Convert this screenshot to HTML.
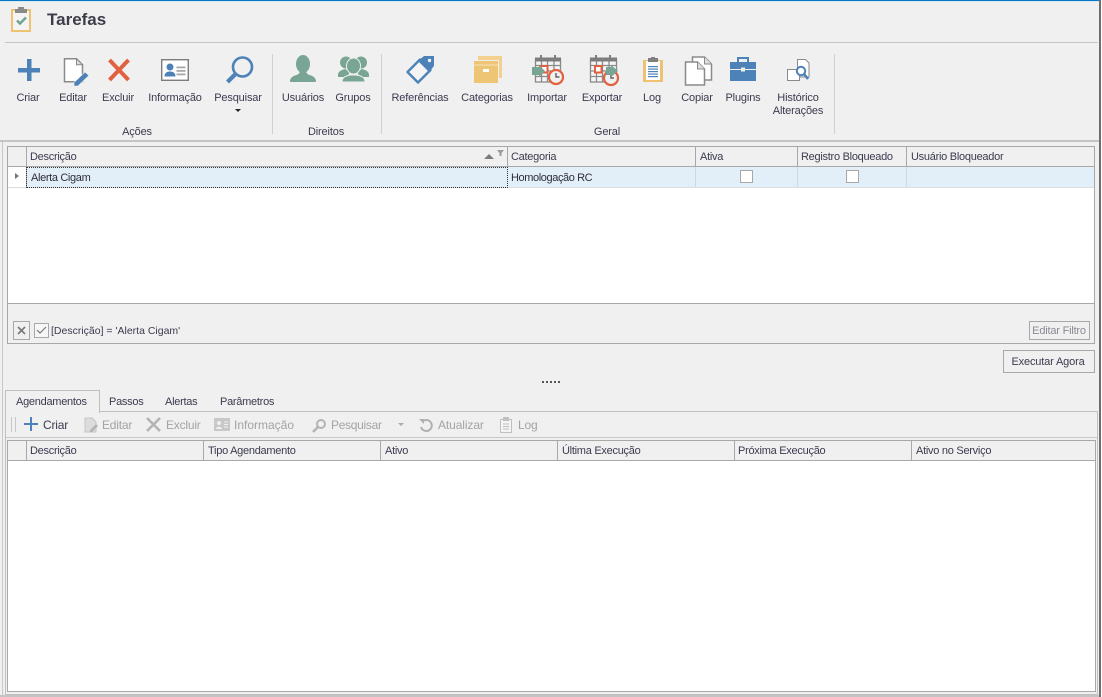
<!DOCTYPE html>
<html><head><meta charset="utf-8">
<style>
html,body{margin:0;padding:0}
body{width:1102px;height:697px;overflow:hidden;background:#f0f0f0;position:relative;font-family:"Liberation Sans",sans-serif;font-size:11px;color:#3b3b4f;letter-spacing:-.15px}
.a{position:absolute}
.t{position:absolute;white-space:nowrap;line-height:14px;height:14px;margin-top:1px}
.c{transform:translateX(-50%);text-align:center}
.b{font-size:12px;margin-top:0;letter-spacing:-.2px}
.h{letter-spacing:-.27px}
.g{color:#a3a3a3}
svg{position:absolute;overflow:visible}
</style></head><body>
<div class="a" style="left:0;top:0;width:1102px;height:1px;background:#0a78c8"></div>
<div class="a" style="left:0;top:1px;width:1102px;height:1px;background:#d8e6f0"></div>

<svg style="left:10px;top:6px" width="23" height="27" viewBox="0 0 23 27">
<rect x="2" y="4" width="18" height="21" fill="#f4f4f4" stroke="#efc272" stroke-width="2"/>
<rect x="1" y="24" width="20" height="2" fill="#efc272"/>
<rect x="5" y="3" width="12" height="4" fill="#8a8a8a"/><rect x="8" y="1" width="6" height="3" fill="#8a8a8a"/>
<path d="M7 14.500l3 3 6-6" fill="none" stroke="#6fa38e" stroke-width="2.4"/>
</svg>
<div class="t" style="left:47px;top:10px;font-size:17px;line-height:18px;height:18px;font-weight:bold;color:#3d3d4a;letter-spacing:0">Tarefas</div>
<div class="a" style="left:5px;top:42px;width:1093px;height:1px;background:#c4c4c4"></div>

<!-- ribbon separators -->
<div class="a" style="left:272px;top:54px;width:1px;height:80px;background:#d0d0d0"></div>
<div class="a" style="left:381px;top:54px;width:1px;height:80px;background:#d0d0d0"></div>
<div class="a" style="left:834px;top:54px;width:1px;height:80px;background:#d0d0d0"></div>

<!-- Criar -->
<svg style="left:18px;top:59px" width="22" height="22"><rect x="0" y="9" width="22" height="4.500" fill="#4d82b8"/><rect x="9" y="0" width="4.500" height="22" fill="#4d82b8"/></svg>
<!-- Editar -->
<svg style="left:63px;top:58px" width="27" height="28">
<path d="M1.500 .8h12l6 6v17H1.500z" fill="#fff" stroke="#8a8a8a" stroke-width="1.5"/><path d="M13.500 .8v6h6z" fill="#ddd" stroke="#8a8a8a"/>
<path d="M11 24.500L22 14l4 3.500L15 28H11z" fill="#4d82b8" stroke="#f0f0f0" stroke-width=".6"/></svg>
<!-- Excluir -->
<svg style="left:108px;top:59px" width="22" height="22"><path d="M1.500 1l19 20M20.500 1L1.500 21" stroke="#e0603f" stroke-width="4" fill="none"/></svg>
<!-- Informacao -->
<svg style="left:161px;top:59px" width="28" height="22"><rect x=".7" y=".7" width="26.600" height="20.600" fill="#fff" stroke="#7d7d7d" stroke-width="1.4"/>
<circle cx="9" cy="8" r="3.500" fill="#4d82b8"/><path d="M3.500 17.500c0-4 3-5 5.500-5s5.500 1 5.500 5z" fill="#4d82b8"/>
<rect x="15.500" y="7.500" width="9" height="1.800" fill="#a8a8a8"/><rect x="15.500" y="11" width="9" height="1.800" fill="#a8a8a8"/><rect x="15.500" y="14.500" width="9" height="1.800" fill="#a8a8a8"/></svg>
<!-- Pesquisar -->
<svg style="left:224px;top:55px" width="30" height="30"><circle cx="18.500" cy="12" r="9.500" fill="none" stroke="#4d82b8" stroke-width="2.600"/><path d="M11 19.500L3.500 27" stroke="#4d82b8" stroke-width="4.200"/></svg>
<!-- Usuarios -->
<svg style="left:289px;top:54px" width="28" height="29" fill="#79a594"><ellipse cx="14" cy="10" rx="7" ry="9"/><path d="M1 28c0-5 3-6 8-7.500l2-2.500h6l2 2.500c5 1.500 8 2.500 8 7.500z"/></svg>
<!-- Grupos -->
<svg style="left:337px;top:55px" width="33" height="28" fill="#79a594">
<circle cx="9" cy="7.500" r="6"/><circle cx="24" cy="7.500" r="6"/><path d="M1 20c0-4 4-5 7-6l5 3-3 5H1zM32 20c0-4-4-5-7-6l-5 3 3 5h9z"/>
<ellipse cx="16.500" cy="11" rx="7" ry="8" stroke="#f0f0f0" stroke-width="1"/><path d="M5 27c0-5 4-6 8-7h7c4 1 8 2 8 7z" stroke="#f0f0f0" stroke-width="1"/></svg>
<!-- Referencias -->
<svg style="left:405px;top:55px" width="30" height="30"><path d="M2.500 17L15 4.500 25.500 15 13 27.500z" fill="#f4f4f4" stroke="#4d82b8" stroke-width="2.400" stroke-linejoin="round"/><path d="M13 6L19 1h10v10l-5 6z" fill="#4d82b8"/><circle cx="24.500" cy="5.500" r="1.700" fill="#f0f0f0"/></svg>
<!-- Categorias -->
<svg style="left:474px;top:56px" width="29" height="28"><rect x="4" y="0" width="24" height="22" fill="#f3cf90"/><rect x="0" y="4" width="25" height="24" fill="#f0f0f0"/><rect x="0" y="5" width="24" height="22" fill="#eec475"/><rect x="0" y="8.500" width="24" height="1" fill="#f7e3bb"/><rect x="9" y="13" width="6" height="3" fill="#fff"/></svg>
<!-- Importar -->
<svg style="left:532px;top:55px" width="33" height="32"><g fill="none" stroke="#8a8a8a" stroke-width="1.300"><rect x="3.500" y="4" width="25" height="23" fill="#f5f5f5"/><path d="M3.500 10.500h25M3.500 16h25M3.500 21.500h25M9.500 4v23M15.500 4v23M22 4v23"/></g><rect x="3" y="2.500" width="26" height="4" fill="#7d7d7d"/><rect x="8" y="0" width="2" height="5" fill="#7d7d7d"/><rect x="22" y="0" width="2" height="5" fill="#7d7d7d"/>
<rect x="9" y="11" width="6.500" height="6.500" fill="#fff" stroke="#e0603f" stroke-width="2"/><path d="M0 12h7V10l6 6-6 6v-2H0z" fill="#79a594"/><circle cx="24" cy="22" r="7" fill="#f0f0f0" stroke="#e0603f" stroke-width="2.200"/><path d="M24 18v4h3.500" fill="none" stroke="#666" stroke-width="1.500"/></svg>
<!-- Exportar -->
<svg style="left:589px;top:55px" width="33" height="32"><g fill="none" stroke="#8a8a8a" stroke-width="1.300"><rect x="1.500" y="4" width="26" height="23" fill="#f5f5f5"/><path d="M1.500 10.500h26M1.500 16h26M1.500 21.500h26M7.500 4v23M13.500 4v23M20 4v23"/></g><rect x="1" y="2.500" width="27" height="4" fill="#7d7d7d"/><rect x="6" y="0" width="2" height="5" fill="#7d7d7d"/><rect x="20" y="0" width="2" height="5" fill="#7d7d7d"/>
<rect x="6" y="11" width="6.500" height="6.500" fill="#fff" stroke="#e0603f" stroke-width="2"/><circle cx="22" cy="23" r="7" fill="#f0f0f0" stroke="#e0603f" stroke-width="2.200"/><path d="M22 20v3h3" fill="none" stroke="#666" stroke-width="1.500"/><path d="M17 12h5V10l7 6-7 6v-2h-5z" fill="#79a594"/></svg>
<!-- Log -->
<svg style="left:642px;top:56px" width="22" height="27"><rect x="1" y="4" width="20" height="22" fill="#efc272"/><rect x="4" y="5" width="14" height="19" fill="#fff"/><rect x="6" y="2" width="10" height="4" fill="#7f7f7f"/><rect x="9" y="1" width="4" height="2" fill="#7f7f7f"/>
<g fill="#4d82b8"><rect x="6" y="10" width="10" height="1.200"/><rect x="6" y="12.500" width="10" height="1.200"/><rect x="6" y="15" width="10" height="1.200"/><rect x="6" y="17.500" width="10" height="1.200"/><rect x="6" y="20" width="10" height="1.200"/></g></svg>
<!-- Copiar -->
<svg style="left:684px;top:56px" width="28" height="30"><path d="M8.500 1h12l7 7v16H8.500z" fill="#fff" stroke="#8a8a8a" stroke-width="1.500"/><path d="M20.500 1v7h7" fill="#ddd" stroke="#8a8a8a"/><path d="M1.500 6h12l7 7v16H1.500z" fill="#fff" stroke="#8a8a8a" stroke-width="1.500"/><path d="M13.500 6v7h7" fill="#ddd" stroke="#8a8a8a"/></svg>
<!-- Plugins -->
<svg style="left:729px;top:56px" width="28" height="26"><path d="M9 6V2h10v4" fill="none" stroke="#4d82b8" stroke-width="2"/><rect x="1" y="6" width="26" height="19" fill="#4d82b8"/><rect x="1" y="13" width="26" height="1" fill="#f0f0f0"/><rect x="12" y="11.500" width="4" height="4" fill="#f0f0f0"/></svg>
<!-- Historico -->
<svg style="left:786px;top:58px" width="24" height="24"><path d="M11.500 1.500h8l3.500 3.500v14H11.500z" fill="#fff" stroke="#8a8a8a"/><path d="M1.500 11.500h12v11H1.500z" fill="#fff" stroke="#8a8a8a"/><circle cx="15" cy="13" r="4.200" fill="#fff" stroke="#4d82b8" stroke-width="2"/><path d="M18 16l4 5" stroke="#4d82b8" stroke-width="2.600"/></svg>

<!-- ribbon labels -->
<div class="t c" style="left:28px;top:90px">Criar</div>
<div class="t c" style="left:73px;top:90px">Editar</div>
<div class="t c" style="left:118px;top:90px">Excluir</div>
<div class="t c" style="left:175px;top:90px">Informação</div>
<div class="t c" style="left:238px;top:90px">Pesquisar</div>
<div class="a" style="left:235px;top:109px;border:3px solid transparent;border-top:3px solid #222;border-bottom:0"></div>
<div class="t c" style="left:303px;top:90px">Usuários</div>
<div class="t c" style="left:353px;top:90px">Grupos</div>
<div class="t c" style="left:420px;top:90px">Referências</div>
<div class="t c" style="left:487px;top:90px">Categorias</div>
<div class="t c" style="left:547px;top:90px">Importar</div>
<div class="t c" style="left:602px;top:90px">Exportar</div>
<div class="t c" style="left:652px;top:90px">Log</div>
<div class="t c" style="left:697px;top:90px">Copiar</div>
<div class="t c" style="left:743px;top:90px">Plugins</div>
<div class="t c" style="left:798px;top:90px">Histórico</div>
<div class="t c" style="left:798px;top:103px">Alterações</div>
<div class="t c" style="left:137px;top:124px">Ações</div>
<div class="t c" style="left:326px;top:124px">Direitos</div>
<div class="t c" style="left:607px;top:124px">Geral</div>

<!-- main frame -->
<div class="a" style="left:0;top:140px;width:1099px;height:2px;background:#c4c4c4"></div>
<div class="a" style="left:2px;top:142px;width:1px;height:555px;background:#c8c8c8"></div>
<div class="a" style="left:1099px;top:0;width:2px;height:697px;background:#6e6e6e"></div>
<div class="a" style="left:1101px;top:0;width:1px;height:697px;background:#fff"></div>

<!-- upper grid -->
<div class="a" style="left:7px;top:146px;width:1086px;height:196px;border:1px solid #a8a8a8;background:#f0f0f0"></div>
<div class="a" style="left:8px;top:166px;width:1086px;height:138px;background:#fff"></div>
<div class="a" style="left:8px;top:166px;width:1086px;height:1px;background:#a8a8a8"></div>
<div class="a" style="left:8px;top:303px;width:1086px;height:1px;background:#a8a8a8"></div>
<div class="a" style="left:26px;top:147px;width:1px;height:40px;background:#a8a8a8"></div>
<div class="a" style="left:507px;top:147px;width:1px;height:19px;background:#a8a8a8"></div>
<div class="a" style="left:695px;top:147px;width:1px;height:19px;background:#a8a8a8"></div>
<div class="a" style="left:797px;top:147px;width:1px;height:19px;background:#a8a8a8"></div>
<div class="a" style="left:906px;top:147px;width:1px;height:19px;background:#a8a8a8"></div>
<div class="t h" style="left:30px;top:149px">Descrição</div>
<div class="t h" style="left:511px;top:149px">Categoria</div>
<div class="t h" style="left:700px;top:149px">Ativa</div>
<div class="t h" style="left:801px;top:149px">Registro Bloqueado</div>
<div class="t h" style="left:911px;top:149px">Usuário Bloqueador</div>
<div class="a" style="left:484px;top:154px;border:5px solid transparent;border-bottom:5px solid #7d7d7d;border-top:0"></div>
<svg style="left:497px;top:150px" width="8" height="7"><path d="M0 0h7L4.500 3v3h-2V3z" fill="#9a9a9a"/></svg>

<!-- row -->
<div class="a" style="left:27px;top:167px;width:1067px;height:20px;background:#e2eff8"></div>
<div class="a" style="left:8px;top:187px;width:1086px;height:1px;background:#dcdcdc"></div>
<div class="a" style="left:26px;top:167px;width:480px;height:19px;border:1px dotted #333"></div>
<div class="a" style="left:695px;top:167px;width:1px;height:20px;background:#d0d8de"></div>
<div class="a" style="left:797px;top:167px;width:1px;height:20px;background:#d0d8de"></div>
<div class="a" style="left:906px;top:167px;width:1px;height:20px;background:#d0d8de"></div>
<div class="a" style="left:15px;top:173px;border:3.500px solid transparent;border-left:4px solid #777;border-right:0"></div>
<div class="t" style="left:31px;top:170px;color:#2e2e3a;letter-spacing:-.35px">Alerta Cigam</div>
<div class="t" style="left:511px;top:170px;color:#2e2e3a;letter-spacing:-.4px">Homologação RC</div>
<div class="a" style="left:740px;top:170px;width:11px;height:11px;border:1px solid #a8a8a8;background:#fff"></div>
<div class="a" style="left:846px;top:170px;width:11px;height:11px;border:1px solid #a8a8a8;background:#fff"></div>

<!-- filter -->
<div class="a" style="left:13px;top:321px;width:15px;height:17px;border:1px solid #a8a8a8"></div>
<svg style="left:17px;top:326px" width="9" height="9"><path d="M1 1l7 7M8 1L1 8" stroke="#777" stroke-width="1.600"/></svg>
<div class="a" style="left:34px;top:323px;width:13px;height:13px;border:1px solid #a8a8a8;background:#f7f7f7"></div>
<svg style="left:36px;top:326px" width="11" height="9"><path d="M1 4l3 3 6-6" fill="none" stroke="#777" stroke-width="1.200"/></svg>
<div class="t" style="left:51px;top:323px;font-size:10.500px;letter-spacing:0">[Descrição] = 'Alerta Cigam'</div>
<div class="a" style="left:1029px;top:321px;width:59px;height:17px;border:1px solid #a8a8a8"></div>
<div class="t c" style="left:1059px;top:323px;color:#8a8a94;letter-spacing:-.2px">Editar Filtro</div>

<!-- execute button -->
<div class="a" style="left:1003px;top:350px;width:90px;height:21px;border:1px solid #a8a8a8"></div>
<div class="t c" style="left:1048px;top:354px">Executar Agora</div>
<div class="a" style="left:542px;top:381px;width:18px;height:2px;background:repeating-linear-gradient(90deg,#555 0 2px,transparent 2px 4px)"></div>

<!-- tabs -->
<div class="a" style="left:5px;top:411px;width:1091px;height:282px;border:1px solid #c0c0c0"></div>
<div class="a" style="left:5px;top:390px;width:93px;height:22px;border:1px solid #c0c0c0;border-bottom:0;background:#f0f0f0"></div>
<div class="t h" style="left:16px;top:394px">Agendamentos</div>
<div class="t h" style="left:109px;top:394px">Passos</div>
<div class="t h" style="left:165px;top:394px">Alertas</div>
<div class="t h" style="left:220px;top:394px">Parâmetros</div>

<!-- toolbar -->
<div class="a" style="left:11px;top:417px;width:3px;height:15px;border-left:1px solid #c8c8c8;border-right:1px solid #c8c8c8"></div>
<svg style="left:24px;top:417px" width="14" height="14"><rect x="0" y="6" width="14" height="2" fill="#4d82b8"/><rect x="6" y="0" width="2" height="14" fill="#4d82b8"/></svg>
<div class="t b" style="left:43px;top:418px">Criar</div>
<svg style="left:84px;top:417px" width="15" height="16"><path d="M1 1h7l4 4v10H1z" fill="#dcdcdc" stroke="#c4c4c4"/><path d="M6 13l6-6 2 2-6 6H6z" fill="#b4b4b4"/></svg>
<div class="t b g" style="left:102px;top:418px">Editar</div>
<svg style="left:146px;top:417px" width="15" height="15"><path d="M1 1l13 13M14 1L1 14" stroke="#b4b4b4" stroke-width="2.600"/></svg>
<div class="t b g" style="left:166px;top:418px">Excluir</div>
<svg style="left:214px;top:418px" width="16" height="13"><rect x="0" y="0" width="16" height="13" fill="#c8c8c8"/><circle cx="5" cy="5" r="2" fill="#f0f0f0"/><path d="M2 11c0-3 6-3 6 0z" fill="#f0f0f0"/><path d="M10 4h4M10 6.500h4M10 9h4" stroke="#f0f0f0"/></svg>
<div class="t b g" style="left:234px;top:418px;letter-spacing:0">Informação</div>
<svg style="left:312px;top:418px" width="15" height="15"><circle cx="9" cy="6" r="4" fill="none" stroke="#b4b4b4" stroke-width="2"/><path d="M6 9l-5 5" stroke="#b4b4b4" stroke-width="2.400"/></svg>
<div class="t b g" style="left:331px;top:418px;letter-spacing:-.3px">Pesquisar</div>
<div class="a" style="left:398px;top:423px;border:3px solid transparent;border-top:3px solid #aaa;border-bottom:0"></div>
<svg style="left:419px;top:418px" width="14" height="14"><path d="M3 4a5.500 5.500 0 1 1 -1 5" fill="none" stroke="#b0b0b0" stroke-width="2"/><path d="M0 1l5 0 0 5z" fill="#b0b0b0"/></svg>
<div class="t b g" style="left:438px;top:418px;letter-spacing:-.1px">Atualizar</div>
<svg style="left:500px;top:417px" width="12" height="16"><rect x=".5" y="2.500" width="11" height="13" fill="#f4f4f4" stroke="#c0c0c0"/><rect x="3" y="0" width="6" height="4" fill="#c0c0c0"/><path d="M3 7h6M3 9.500h6M3 12h6" stroke="#c0c0c0"/></svg>
<div class="t b g" style="left:518px;top:418px">Log</div>

<!-- lower grid -->
<div class="a" style="left:6px;top:437px;width:1091px;height:1px;background:#c8c8c8"></div>
<div class="a" style="left:7px;top:440px;width:1087px;height:250px;border:1px solid #a8a8a8;background:#fff"></div>
<div class="a" style="left:8px;top:441px;width:1087px;height:19px;background:#f0f0f0"></div>
<div class="a" style="left:8px;top:460px;width:1087px;height:1px;background:#a8a8a8"></div>
<div class="a" style="left:26px;top:441px;width:1px;height:19px;background:#a8a8a8"></div>
<div class="a" style="left:203px;top:441px;width:1px;height:19px;background:#a8a8a8"></div>
<div class="a" style="left:380px;top:441px;width:1px;height:19px;background:#a8a8a8"></div>
<div class="a" style="left:557px;top:441px;width:1px;height:19px;background:#a8a8a8"></div>
<div class="a" style="left:734px;top:441px;width:1px;height:19px;background:#a8a8a8"></div>
<div class="a" style="left:911px;top:441px;width:1px;height:19px;background:#a8a8a8"></div>
<div class="t h" style="left:30px;top:443px">Descrição</div>
<div class="t h" style="left:208px;top:443px">Tipo Agendamento</div>
<div class="t h" style="left:385px;top:443px">Ativo</div>
<div class="t h" style="left:562px;top:443px">Última Execução</div>
<div class="t h" style="left:738px;top:443px">Próxima Execução</div>
<div class="t h" style="left:916px;top:443px">Ativo no Serviço</div>

<div class="a" style="left:0;top:695px;width:1099px;height:2px;background:#c4c4c4"></div>
</body></html>
